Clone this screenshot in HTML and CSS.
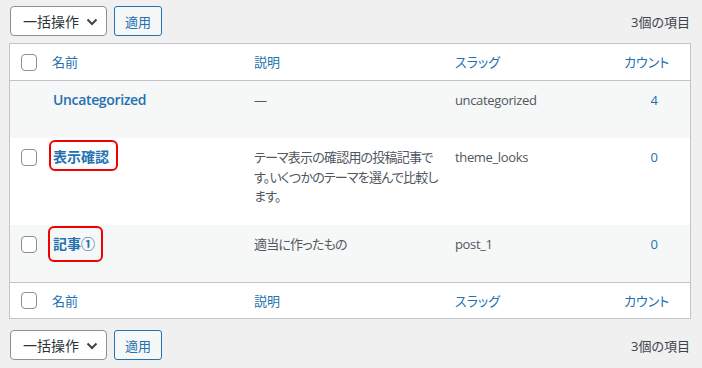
FILE: index.html
```html
<!DOCTYPE html>
<html lang="ja">
<head>
<meta charset="utf-8">
<title>カテゴリー</title>
<link rel="stylesheet" href="styles.css">
</head>
<body>
<div class="wrap">
  <div class="tablenav top">
    <div class="bulk">
      <div class="select">
        <span>一括操作</span>
        <svg class="chev" width="12" height="8" viewBox="0 0 12 8"><path d="M1.5 1.5 L6 6 L10.5 1.5" fill="none" stroke="#3c434a" stroke-width="2"/></svg>
      </div>
      <button class="apply">適用</button>
    </div>
    <div class="count-items">3個の項目</div>
  </div>

  <table class="list">
    <colgroup>
      <col class="c-check"><col class="c-name"><col class="c-desc"><col class="c-slug"><col class="c-count">
    </colgroup>
    <thead>
      <tr class="head">
        <td class="check"><span class="box"></span></td>
        <th><a>名前</a></th>
        <th><a>説明</a></th>
        <th><a>スラッグ</a></th>
        <th class="num-h"><a>カウント</a></th>
      </tr>
    </thead>
    <tbody>
      <tr class="row alt">
        <td class="check"></td>
        <td class="name"><a class="title latin">Uncategorized</a></td>
        <td class="desc">—</td>
        <td class="slug latin">uncategorized</td>
        <td class="num"><a class="latin">4</a></td>
      </tr>
      <tr class="row tall">
        <td class="check"><span class="box"></span></td>
        <td class="name"><a class="title">表示確認</a><span class="mark mark1"></span></td>
        <td class="desc">テーマ表示の確認用の投稿記事です。いくつかのテーマを選んで比較します。</td>
        <td class="slug latin">theme_looks</td>
        <td class="num"><a class="latin">0</a></td>
      </tr>
      <tr class="row alt">
        <td class="check"><span class="box"></span></td>
        <td class="name"><a class="title">記事①</a><span class="mark mark2"></span></td>
        <td class="desc">適当に作ったもの</td>
        <td class="slug latin">post_1</td>
        <td class="num"><a class="latin">0</a></td>
      </tr>
    </tbody>
    <tfoot>
      <tr class="foot">
        <td class="check"><span class="box"></span></td>
        <th><a>名前</a></th>
        <th><a>説明</a></th>
        <th><a>スラッグ</a></th>
        <th class="num-h"><a>カウント</a></th>
      </tr>
    </tfoot>
  </table>

  <div class="tablenav bottom">
    <div class="bulk">
      <div class="select">
        <span>一括操作</span>
        <svg class="chev" width="12" height="8" viewBox="0 0 12 8"><path d="M1.5 1.5 L6 6 L10.5 1.5" fill="none" stroke="#3c434a" stroke-width="2"/></svg>
      </div>
      <button class="apply">適用</button>
    </div>
    <div class="count-items">3個の項目</div>
  </div>
</div>
</body>
</html>
```
FILE: styles.css
```css
* { box-sizing: border-box; }
html, body {
  margin: 0;
  padding: 0;
  background: #f0f0f1;
}
body {
  font-family: "Open Sans", "Noto Sans CJK JP", sans-serif;
  font-size: 13px;
  color: #3c434a;
  font-feature-settings: "palt" 1;
}
.wrap {
  width: 682px;
  margin-left: 9px;
}
.tablenav {
  display: flex;
  align-items: center;
  justify-content: space-between;
  height: 30px;
  padding-left: 1px;
}
.tablenav.top { margin-top: 6px; margin-bottom: 7px; }
.tablenav.bottom { margin-top: 11px; }
.bulk { display: flex; gap: 7px; }
.select {
  width: 97px;
  height: 30px;
  border: 1px solid #8c8f94;
  border-radius: 4px;
  background: #fff;
  display: flex;
  align-items: center;
  justify-content: space-between;
  padding: 0 8px 0 12px;
  font-size: 14px;
  color: #2c3338;
}
.chev { margin-top: 1px; }
.apply {
  height: 30px;
  width: 48px;
  border: 1px solid #2271b1;
  border-radius: 3px;
  background: #f6f7f7;
  color: #2271b1;
  font-family: inherit;
  font-feature-settings: "palt" 1;
  font-size: 13px;
  padding: 0;
}
.count-items {
  font-size: 13px;
  color: #3c434a;
  padding-right: 1px;
}
.list {
  width: 682px;
  border: 1px solid #c3c4c7;
  border-collapse: separate;
  border-spacing: 0;
  table-layout: fixed;
  background: #fff;
}
.c-check { width: 32px; }
.c-name { width: 202px; }
.c-desc { width: 201px; }
.c-slug { width: 169px; }
.c-count { width: 76px; }
th, td {
  padding: 0 10px;
  text-align: left;
  font-weight: 400;
  white-space: nowrap;
}
a { color: #2271b1; text-decoration: none; }
.head th, .head td {
  height: 37px;
  line-height: 18px;
  border-bottom: 1px solid #c3c4c7;
  vertical-align: middle;
}
.foot th, .foot td {
  height: 36px;
  line-height: 18px;
  border-top: 1px solid #c3c4c7;
  vertical-align: middle;
}
.check { padding: 0 0 0 11px; }
.box {
  display: block;
  width: 16px;
  height: 17px;
  border: 1px solid #8c8f94;
  border-radius: 4px;
  background: #fff;
}
.row td {
  vertical-align: top;
  height: 57px;
  padding-top: 9px;
  line-height: 20px;
  color: #50575e;
}
.row td.check { padding-top: 11px; }
.row.tall td { height: 87px; }
.row.alt td { background: #f6f7f7; }
.name { position: relative; }
.title {
  font-size: 14px;
  font-weight: 600;
  padding-left: 1px;
}
.latin { letter-spacing: -0.35px; }
.row td.desc {
  white-space: normal;
  padding-top: 10px;
  padding-right: 4px;
  line-height: 19.5px;
  letter-spacing: -0.8px;
}
.num { text-align: center; padding-left: 12px; padding-right: 8px; }
.mark {
  position: absolute;
  border: 2.5px solid #f00000;
  border-radius: 6px;
}
.mark1 { left: 7px; top: 2px; width: 69px; height: 31px; }
.mark2 { left: 6px; top: 1px; width: 55px; height: 36px; }
```
